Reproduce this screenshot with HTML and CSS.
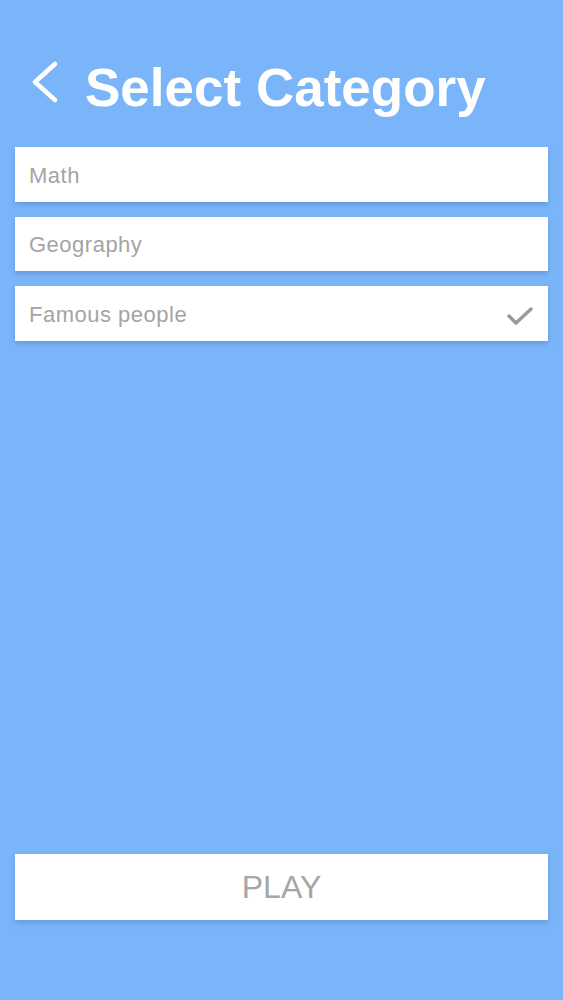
FILE: index.html
```html
<!DOCTYPE html>
<html lang="en">
<head>
    <meta charset="UTF-8">
    <meta name="viewport" content="width=device-width, initial-scale=1.0">
    <title>Select Category</title>
    <link rel="stylesheet" href="styles.css">
</head>
<body>
    <div class="screen">
        <div class="header">
            <svg class="back" width="28" height="44" viewBox="0 0 28 44">
                <polyline points="23,4 3,22 23,40" fill="none" stroke="#fff" stroke-width="4.5" stroke-linecap="round" stroke-linejoin="round"/>
            </svg>
            <h1 class="title">Select Category</h1>
        </div>

        <div class="category-list">
            <div class="category">Math</div>
            <div class="category">Geography</div>
            <div class="category selected">
                <span>Famous people</span>
                <svg class="check" width="28" height="20" viewBox="0 0 28 20">
                    <polyline points="3,10 10,17 25,3" fill="none" stroke="#9a9a9a" stroke-width="3.5" stroke-linecap="round" stroke-linejoin="round"/>
                </svg>
            </div>
        </div>

        <div class="spacer"></div>

        <button class="play-btn">PLAY</button>
    </div>
</body>
</html>
```

FILE: styles.css
```css
body {
    margin: 0;
    background: #7bb5f9;
    font-family: "Liberation Sans", Arial, sans-serif;
}

.screen {
    height: 1000px;
    display: flex;
    flex-direction: column;
    padding: 0 15px 80px;
    box-sizing: border-box;
}

.header {
    display: flex;
    align-items: flex-start;
    padding: 60px 0 0 17px;
    margin-bottom: 33px;
}

.back {
    display: block;
    margin-right: 25px;
}

.title {
    margin: 2px 0 0;
    font-size: 53px;
    line-height: 52px;
    font-weight: bold;
    color: white;
}

.category-list {
    display: flex;
    flex-direction: column;
    gap: 15px;
}

.category {
    height: 54.5px;
    background: white;
    display: flex;
    align-items: center;
    justify-content: space-between;
    padding: 3px 14px 0 14px;
    box-sizing: border-box;
    font-size: 22px;
    letter-spacing: 0.5px;
    color: #a4a4a4;
    box-shadow: 0 3px 5px rgba(40, 80, 140, 0.25);
}

.check {
    display: block;
    margin-top: 3px;
}

.spacer {
    flex: 1;
}

.play-btn {
    height: 66px;
    border: none;
    background: white;
    color: #a6a6a6;
    font-family: inherit;
    font-size: 32px;
    box-shadow: 0 3px 6px rgba(40, 80, 140, 0.25);
}
```
